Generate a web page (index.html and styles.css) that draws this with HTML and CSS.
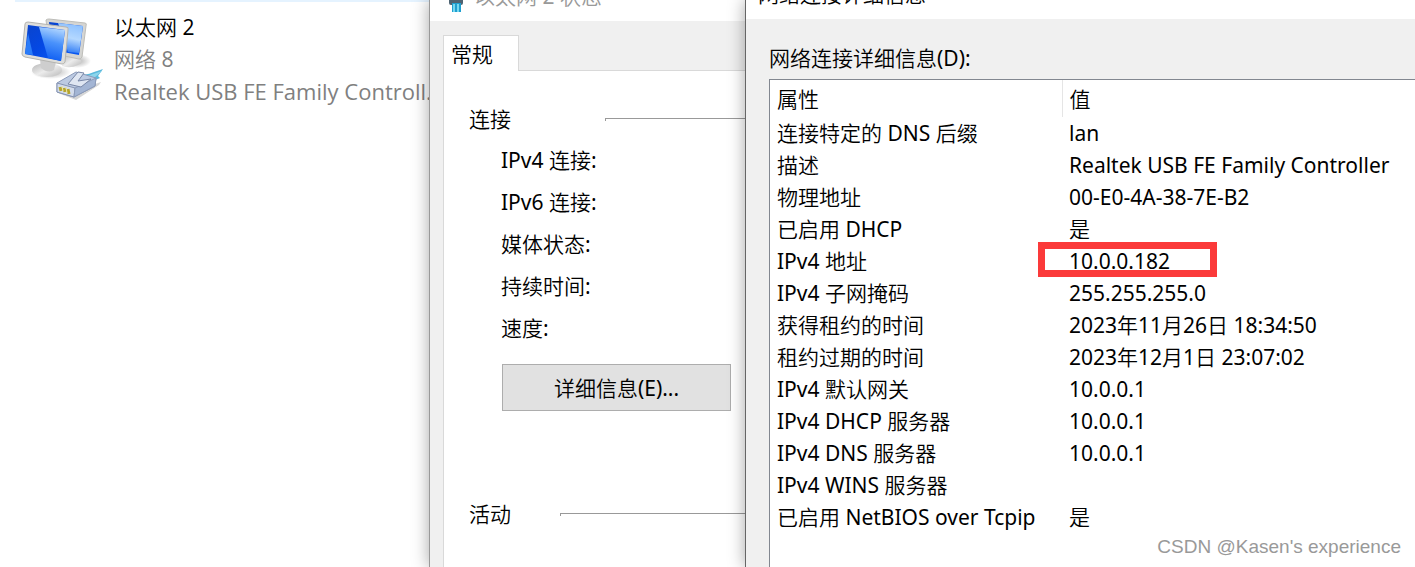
FILE: index.html
```html
<!DOCTYPE html>
<html lang="zh-CN">
<head>
<meta charset="UTF-8">
<meta name="viewport" content="width=device-width, initial-scale=1.0">
<title>网络连接详细信息</title>
<link rel="stylesheet" href="styles.css">
</head>
<body>

<div class="desktop">
    <section class="connections">
        <div class="selection"></div>
        <div class="adapter">
            <svg class="adapter-icon" viewBox="0 0 86 86" aria-hidden="true">
                <defs>
                    <linearGradient id="screen" x1="0" y1="0" x2="1" y2="1">
                        <stop offset="0" stop-color="#0a44cc"/>
                        <stop offset="0.5" stop-color="#0448e4"/>
                        <stop offset="1" stop-color="#0a5cf5"/>
                    </linearGradient>
                    <linearGradient id="glare" x1="0.6" y1="0" x2="0.4" y2="1">
                        <stop offset="0" stop-color="#b4d8ff"/>
                        <stop offset="0.45" stop-color="#4a92fb"/>
                        <stop offset="1" stop-color="#0c5cf2"/>
                    </linearGradient>
                    <linearGradient id="glare-back" x1="0.6" y1="0" x2="0.4" y2="1">
                        <stop offset="0" stop-color="#8cc0ff"/>
                        <stop offset="0.5" stop-color="#b4d8ff"/>
                        <stop offset="1" stop-color="#2a78f5"/>
                    </linearGradient>
                    <linearGradient id="stand" x1="0" y1="0" x2="1" y2="1">
                        <stop offset="0" stop-color="#b5b5b5"/>
                        <stop offset="0.5" stop-color="#ececec"/>
                        <stop offset="1" stop-color="#b8b8b8"/>
                    </linearGradient>
                    <radialGradient id="shade">
                        <stop offset="0" stop-color="#777" stop-opacity="0.6"/>
                        <stop offset="1" stop-color="#777" stop-opacity="0"/>
                    </radialGradient>
                </defs>
                <!-- back monitor -->
                <ellipse cx="57" cy="45" rx="14" ry="7" fill="url(#shade)"/>
                <path d="M46 38 L57 40 L59 43 Q65 46 58 49 Q50 53 42 50 Z" fill="url(#stand)"/>
                <path d="M26 4 Q27 3 29 3 L65 7 Q67 7 66 10 L62 41 Q61 43 59 43 L30 37 Z" fill="#d5d5d2" stroke="#bdbdb9"/>
                <path d="M29 6 L63 10 L59 39 L32 34 Z" fill="url(#screen)"/>
                <path d="M38 7 L63 10 L59 37 L48 36 Z" fill="url(#glare-back)"/>
                <!-- front monitor -->
                <ellipse cx="31" cy="56" rx="20" ry="7" fill="url(#shade)"/>
                <ellipse cx="27" cy="54" rx="15" ry="7" fill="url(#stand)"/>
                <path d="M20 43 L36 46 L34 54 Q28 58 21 52 Z" fill="#cecece"/>
                <path d="M5 8 Q5 6 8 6 L46 11 Q49 11 48 14 L45 46 Q44 48 42 48 L5 41 Q2 40 2 38 Z" fill="#dededb" stroke="#b4b4b0"/>
                <path d="M8 9 L45 14 L41 45 L5 38 Z" fill="url(#screen)"/>
                <path d="M19 11 L45 14 L41 45 L28 42 Z" fill="url(#glare)"/>
                <path d="M5 38 L8 17 L13 39 Z" fill="#2a7cf8"/>
                <!-- network plug -->
                <path d="M38 77 L56 84 L79 69 L81 66 L60 73 Z" fill="#777" opacity="0.3"/>
                <path d="M63 59 Q70 58 74 56 L83 53 L78 60 L80 62 L68 67 Z" fill="#5bb9dc"/>
                <path d="M67 60 L82 55 L74 62 Z" fill="#8cd5ec"/>
                <path d="M37 67 L56 56 L76 62 L75 70 L54 81 L37 76 Z" fill="#bccae2" stroke="#8c9bb9"/>
                <path d="M37 67 L55 72 L54 81 L37 76 Z" fill="#d3dcec" stroke="#8593b2"/>
                <path d="M55 72 L76 62 L75 70 L54 81 Z" fill="#a3b5d4" stroke="#8c9bb9"/>
                <path d="M48 68 L58 56 L64 57 L58 65 L71 63 L61 71 Z" fill="#dfe6f2" stroke="#7988a8"/>
                <path d="M40 71 L41 75 M44 72 L45 76 M48 73 L49 78" stroke="#b6a52f" stroke-width="3"/>
                <path d="M42 70 L43 75 M46 71 L47 77" stroke="#eee597"/>
            </svg>
            <div class="adapter-text">
                <div class="adapter-name">以太网 2</div>
                <div>网络 8</div>
                <div class="adapter-device">Realtek USB FE Family Controll.</div>
            </div>
        </div>
    </section>

    <section class="window status">
        <header class="titlebar">
            <svg class="title-icon" viewBox="0 0 16 24" aria-hidden="true">
                <rect x="1" y="0" width="14" height="17" rx="2" fill="#4e6372"/>
                <rect x="4" y="15" width="9" height="9" fill="#1e9fd0"/>
                <path d="M6 16 V24 M10 16 V24" stroke="#77d7ef" stroke-width="2"/>
            </svg>
            <span>以太网 2 状态</span>
        </header>
        <div class="status-body">
            <button type="button" class="tab">常规</button>
            <div class="panel">
                <h2 class="group group-connection">连接</h2>
                <ul class="fields">
                    <li>IPv4 连接:</li>
                    <li>IPv6 连接:</li>
                    <li>媒体状态:</li>
                    <li>持续时间:</li>
                    <li>速度:</li>
                </ul>
                <button type="button" class="details-button">详细信息(E)...</button>
                <h2 class="group group-activity">活动</h2>
            </div>
        </div>
    </section>

    <section class="window details">
        <header class="titlebar">网络连接详细信息</header>
        <div class="details-body">
            <h2 class="list-label" id="list-label">网络连接详细信息(D):</h2>
            <div class="list">
                <table aria-labelledby="list-label">
                    <thead>
                        <tr><th>属性</th><th>值</th></tr>
                    </thead>
                    <tbody>
                        <tr><td>连接特定的 DNS 后缀</td><td>lan</td></tr>
                        <tr><td>描述</td><td>Realtek USB FE Family Controller</td></tr>
                        <tr><td>物理地址</td><td>00-E0-4A-38-7E-B2</td></tr>
                        <tr><td>已启用 DHCP</td><td>是</td></tr>
                        <tr><td>IPv4 地址</td><td class="marked">10.0.0.182</td></tr>
                        <tr><td>IPv4 子网掩码</td><td>255.255.255.0</td></tr>
                        <tr><td>获得租约的时间</td><td>2023年11月26日 18:34:50</td></tr>
                        <tr><td>租约过期的时间</td><td>2023年12月1日 23:07:02</td></tr>
                        <tr><td>IPv4 默认网关</td><td>10.0.0.1</td></tr>
                        <tr><td>IPv4 DHCP 服务器</td><td>10.0.0.1</td></tr>
                        <tr><td>IPv4 DNS 服务器</td><td>10.0.0.1</td></tr>
                        <tr><td>IPv4 WINS 服务器</td><td></td></tr>
                        <tr><td>已启用 NetBIOS over Tcpip</td><td>是</td></tr>
                    </tbody>
                </table>
            </div>
        </div>
    </section>

    <div class="watermark">CSDN @Kasen's experience</div>
</div>

</body>
</html>
```
FILE: styles.css
```css
*,
*::after {
    box-sizing: border-box;
}

body {
    margin: 0;
    font-family: "Noto Sans", "Noto Sans CJK SC DemiLight", "Noto Sans CJK SC", sans-serif;
    font-size: 21px;
    line-height: 32px;
    color: #000;
    background-color: #fff;
}

h2 {
    margin: 0;
    font-size: 21px;
    font-weight: normal;
}

button {
    font: inherit;
    color: inherit;
}

.desktop {
    position: relative;
    display: grid;
    grid-template-columns: 429px 316px 1fr;
    height: 100vh;
    overflow: hidden;
    white-space: nowrap;
}

/* network connections folder */
.connections {
    min-width: 0;
}

.selection {
    height: 2px;
    margin-left: 15px;
    background-color: #e5f3ff;
}

.adapter {
    display: flex;
    gap: 8px;
    padding: 9px 0 0 20px;
    font-family: "Open Sans", "Noto Sans CJK SC DemiLight", "Noto Sans CJK SC", sans-serif;
    color: #808080;
}

.adapter-icon {
    flex: none;
    width: 86px;
    height: 86px;
    margin-top: 5px;
}

.adapter-name {
    color: #000;
}

.adapter-device {
    font-size: 22px;
}

/* dialogs */
.window {
    position: relative;
    min-width: 0;
    border-left: 1px solid #999;
    background-color: #f0f0f0;
    box-shadow: 0 0 16px rgba(0, 0, 0, 0.35);
}

.titlebar {
    display: flex;
    align-items: flex-end;
    height: 21px;
    padding: 0 12px 9px;
    background-color: #fff;
}

.status .titlebar {
    gap: 10px;
    padding-left: 18px;
    color: #999;
}

.title-icon {
    width: 16px;
    height: 24px;
}

.status-body {
    display: flex;
    flex-direction: column;
    align-items: flex-start;
    height: 100%;
    padding: 14px 0 0 13px;
}

.tab {
    z-index: 1;
    width: 76px;
    height: 36px;
    margin-bottom: -1px;
    padding: 0 0 0 7px;
    border: 1px solid #d9d9d9;
    border-bottom: none;
    background-color: #fff;
    line-height: 32px;
    text-align: left;
}

.panel {
    flex: 1;
    align-self: stretch;
    padding: 32px 0 0 25px;
    border: 1px solid #d9d9d9;
    border-right: none;
    background-color: #fff;
}

.group {
    display: flex;
    align-items: center;
}

.group::after {
    content: "";
    flex: 1;
    height: 3px;
    border-top: 1px solid #999;
    border-left: 1px solid #999;
}

.group-connection::after {
    margin-left: 94px;
}

.group-activity::after {
    margin-left: 49px;
}

.fields {
    margin: 4px 0 15px 32px;
    padding: 0;
    list-style: none;
    line-height: 42px;
}

.details-button {
    display: block;
    width: 229px;
    height: 47px;
    margin: 0 0 87px 33px;
    padding: 0;
    border: 1px solid #adadad;
    background-color: #e1e1e1;
}

.details {
    border-left-color: #666;
}

.details .titlebar {
    height: 19px;
}

.details-body {
    display: flex;
    flex-direction: column;
    height: 100%;
    padding: 23px 0 0 23px;
}

.list-label {
    margin-bottom: 5px;
}

.list {
    flex: 1;
    border: 1px solid #828790;
    border-right: none;
    background-color: #fff;
}

table {
    width: 100%;
    table-layout: fixed;
    border-collapse: collapse;
}

th,
td {
    height: 32px;
    padding: 0 0 0 7px;
    font-weight: normal;
    text-align: left;
}

th {
    height: 37px;
}

th:first-child {
    width: 292px;
    border-right: 1px solid #e5e5e5;
}

.marked {
    position: relative;
}

/* red frame drawn over the address */
.marked::after {
    content: "";
    position: absolute;
    top: -3px;
    left: -24px;
    width: 179px;
    height: 35px;
    border: 7px solid #fb3a3a;
}

.watermark {
    position: absolute;
    right: 14px;
    bottom: 4px;
    font-family: "Liberation Sans", Arial, sans-serif;
    font-size: 19px;
    color: #999;
}
```
